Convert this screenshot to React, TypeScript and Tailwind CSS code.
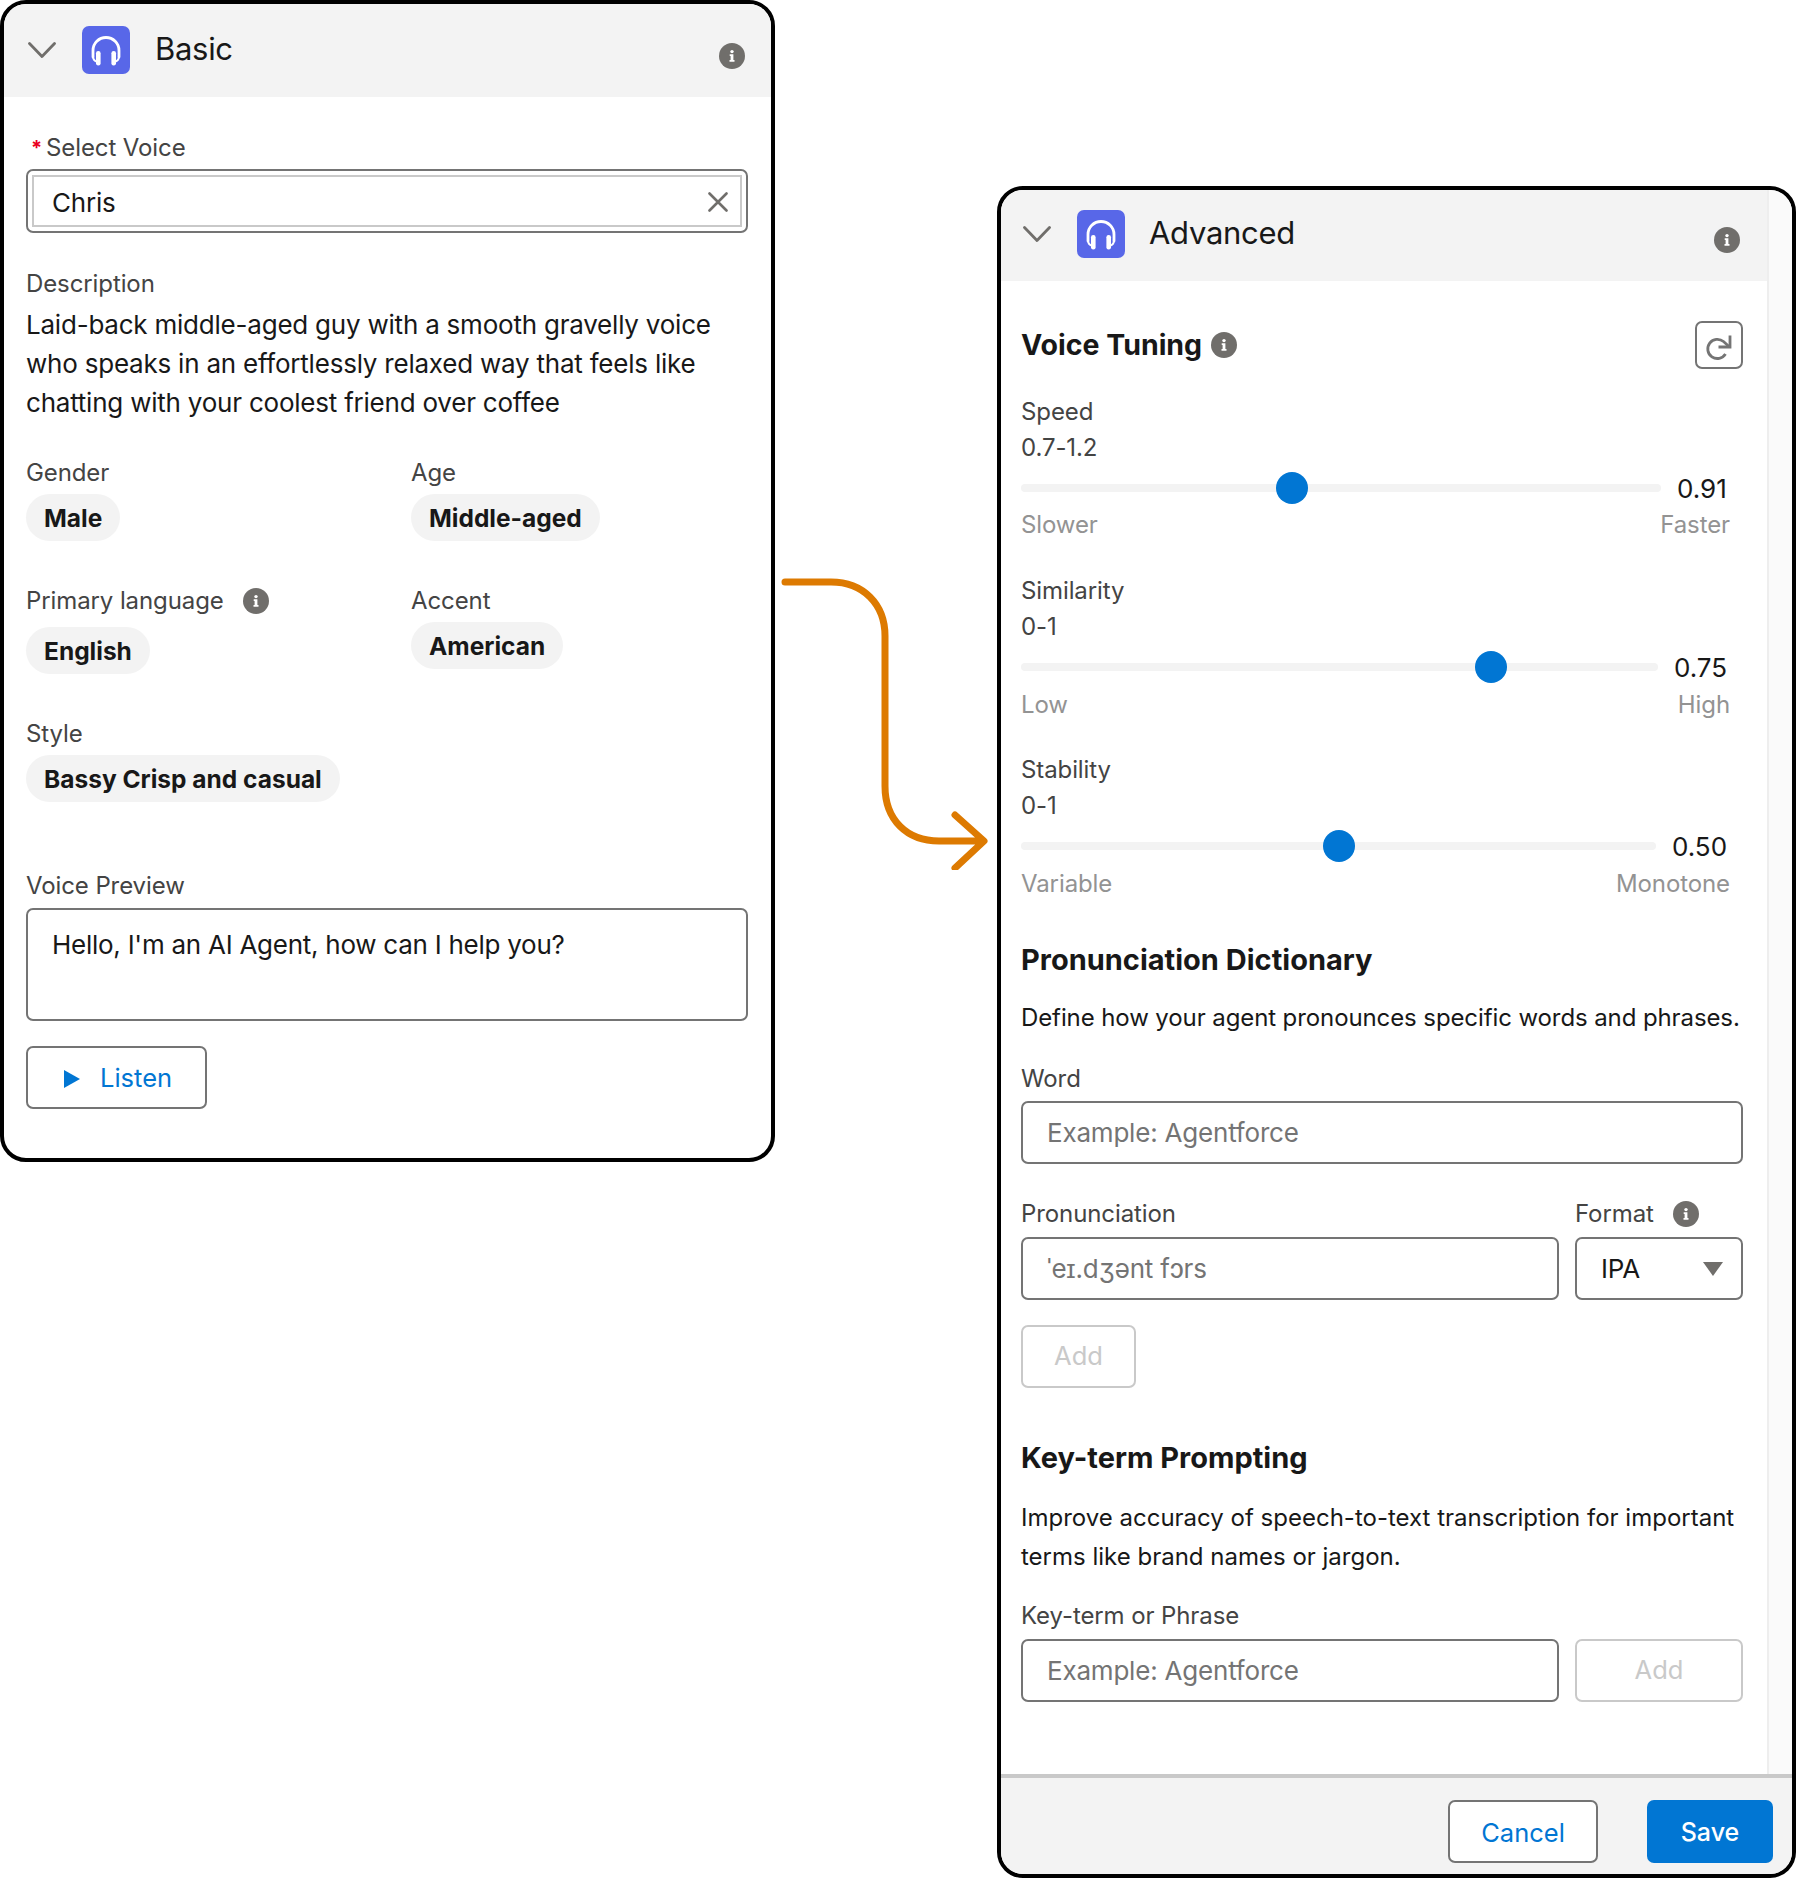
import React from "react";

function Info({ className = "" }: { className?: string }) {
  return (
    <svg viewBox="0 0 26 26" className={"w-[26px] h-[26px] shrink-0 " + className}>
      <circle cx="13" cy="13" r="13" fill="#706e6b" />
      <circle cx="13" cy="8.6" r="1.7" fill="#fff" />
      <path d="M10.7 11.2h3.7v5.8h1.1v1.8H10.5V17h1.1v-4h-.9z" fill="#fff" />
    </svg>
  );
}

function Chevron() {
  return (
    <svg viewBox="0 0 28 16" className="w-[28px] h-[16px] shrink-0" fill="none">
      <path d="M1.5 1.5 14 14.5 26.5 1.5" stroke="#706e6b" strokeWidth="2.8" strokeLinecap="round" strokeLinejoin="round" />
    </svg>
  );
}

function HeadIcon() {
  return (
    <div className="w-[48px] h-[48px] rounded-[7px] bg-[#5867e8] shrink-0">
      <svg viewBox="0 0 48 48" className="w-[48px] h-[48px]" fill="none">
        <path d="M11 31V24.5a13 13 0 0 1 26 0V31" stroke="#fff" strokeWidth="2.8" strokeLinecap="round" />
        <path d="M11 30c0 3 1.2 4.8 3.5 5.6M37 30c0 3-1.2 4.8-3.5 5.6" stroke="#fff" strokeWidth="2" />
        <rect x="14" y="25" width="4.6" height="14.5" rx="2.2" fill="#fff" />
        <rect x="29.4" y="25" width="4.6" height="14.5" rx="2.2" fill="#fff" />
      </svg>
    </div>
  );
}

function Label({ children, className = "" }: { children: React.ReactNode; className?: string }) {
  return <div className={"h-[36px] leading-[36px] text-[24px] tracking-[-0.1px] text-[#444444] " + className}>{children}</div>;
}

function Pill({ children, className = "" }: { children: React.ReactNode; className?: string }) {
  return (
    <div className={"flex w-fit items-center h-[47px] pt-[1px] px-[18px] rounded-full bg-[#f3f3f3] text-[24.5px] font-bold text-[#181818] " + className}>
      {children}
    </div>
  );
}

function Slider({ track, pct, value, low, high, lowCls = "mt-[4px]" }: { track: string; pct: number; value: string; low: string; high: string; lowCls?: string }) {
  return (
    <div>
      <div className="mt-[6px] flex items-center h-[32px] gap-[16px]">
        <div className={"relative h-[8px] rounded-full bg-[#f3f3f3] " + track}>
          <div
            className="absolute top-[-12px] w-[32px] h-[32px] -ml-[16px] rounded-full bg-[#0176d3]"
            style={{ left: pct + "%" }}
          />
        </div>
        <div className="text-[26px] text-[#181818]">{value}</div>
      </div>
      <div className={"w-[709px] flex justify-between h-[36px] leading-[36px] text-[24px] tracking-[-0.1px] text-[#939393] " + lowCls}>
        <span>{low}</span>
        <span>{high}</span>
      </div>
    </div>
  );
}

const inputCls =
  "h-[63px] px-[24px] rounded-[7px] border-2 border-[#747474] bg-white text-[26px] tracking-[-0.2px] text-[#181818] outline-none placeholder:text-[#747474]";

function DisabledButton({ className = "" }: { className?: string }) {
  return (
    <button className={"h-[63px] rounded-[7px] border-2 border-[#c9c9c9] bg-white text-[25.5px] text-[#c9c9c9] " + className}>Add</button>
  );
}

export default function App() {
  return (
    <div className="w-[1796px] h-[1878px] bg-white flex items-start font-['Inter',sans-serif] overflow-hidden">
      <section className="w-[775px] h-[1162px] shrink-0 rounded-[26px] border-4 border-black overflow-hidden">
        <header className="h-[93px] bg-[#f3f3f3] flex items-center pl-[24px] pr-[26px] pb-[2px]">
          <Chevron />
          <div className="ml-[26px]"><HeadIcon /></div>
          <h2 className="ml-[25px] text-[31px] tracking-[-0.3px] text-[#181818] font-normal">Basic</h2>
          <Info className="ml-auto mt-[12px]" />
        </header>
        <div className="pl-[22px] pr-[23px]">
          <Label className="mt-[33px] pl-[5px] flex">
            <span className="text-[#ea001e] w-[15px] text-[20px] font-bold">*</span>Select Voice
          </Label>
          <div className="mt-[3px] h-[64px] rounded-[7px] border-2 border-[#747474] p-[4px]">
            <div className="h-full border-2 border-[#c9c9c9] flex items-center justify-between pt-[2px] pl-[18px] pr-[12px] text-[26px] tracking-[-0.2px] text-[#181818]">
              <span>Chris</span>
              <svg viewBox="0 0 20 20" className="w-[20px] h-[20px]" fill="none">
                <path d="M1.5 1.5 18.5 18.5M18.5 1.5 1.5 18.5" stroke="#706e6b" strokeWidth="2.6" strokeLinecap="round" />
              </svg>
            </div>
          </div>
          <Label className="mt-[33px]">Description</Label>
          <p className="mt-[3px] text-[26px] tracking-[-0.22px] leading-[39px] text-[#181818]">
            Laid-back middle-aged guy with a smooth gravelly voice
            <br />
            who speaks in an effortlessly relaxed way that feels like
            <br />
            chatting with your coolest friend over coffee
          </p>
          <div className="mt-[33px] grid grid-cols-[385px_1fr] gap-y-[42px]">
            <div>
              <Label>Gender</Label>
              <Pill className="mt-[3px]">Male</Pill>
            </div>
            <div>
              <Label>Age</Label>
              <Pill className="mt-[3px]">Middle-aged</Pill>
            </div>
            <div>
              <Label className="flex items-center gap-[19px]">
                Primary language <Info />
              </Label>
              <Pill className="mt-[8px]">English</Pill>
            </div>
            <div>
              <Label>Accent</Label>
              <Pill className="mt-[3px]">American</Pill>
            </div>
            <div className="col-span-2">
              <Label>Style</Label>
              <Pill className="mt-[3px]">Bassy Crisp and casual</Pill>
            </div>
          </div>
          <Label className="mt-[66px]">Voice Preview</Label>
          <div className="mt-[4px] h-[113px] rounded-[7px] border-2 border-[#747474] pl-[24px] pt-[15px] text-[26px] tracking-[-0.26px] leading-[39px] text-[#181818]">
            Hello, I'm an AI Agent, how can I help you?
          </div>
          <button className="mt-[25px] w-[181px] h-[63px] rounded-[7px] border-2 border-[#747474] flex items-center pl-[36px] pt-[1px] gap-[20px] text-[25.5px] text-[#0176d3]">
            <svg viewBox="0 0 16 18" className="w-[16px] h-[18px] mt-[2px]"><path d="M0 0 16 9 0 18z" fill="#0176d3" /></svg>
            Listen
          </button>
        </div>
      </section>

      <svg viewBox="0 0 222 300" className="w-[222px] h-[300px] shrink-0 mt-[570px]" fill="none">
        <path
          d="M10 12H56C88 12 110 34 110 66V216C110 250 132 271 164 271H208M180 245 209 271 180 298"
          stroke="#dd7a01"
          strokeWidth="7"
          strokeLinecap="round"
          strokeLinejoin="round"
        />
      </svg>

      <section className="w-[799px] h-[1692px] shrink-0 mt-[186px] rounded-[26px] border-4 border-black overflow-hidden flex flex-col">
        <div className="flex-1 flex min-h-0">
          <div className="w-[766px]">
            <header className="h-[91px] bg-[#f3f3f3] flex items-center pl-[22px] pr-[27px] pb-[4px]">
              <Chevron />
              <div className="ml-[26px]"><HeadIcon /></div>
              <h2 className="ml-[24px] text-[31px] tracking-[-0.3px] text-[#181818] font-normal">Advanced</h2>
              <Info className="ml-auto mt-[12px]" />
            </header>
            <div className="pl-[20px] pr-[24px]">
              <div className="mt-[40px] flex items-center h-[48px]">
                <h3 className="text-[28.5px] font-bold text-[#181818]">Voice Tuning</h3>
                <Info className="ml-[9px]" />
                <button className="ml-auto w-[48px] h-[48px] rounded-[7px] border-2 border-[#747474] shrink-0">
                  <svg viewBox="0 0 44 44" className="w-[44px] h-[44px]" fill="none">
                    <path d="M32.5 24 26.5 18.5A9.6 9.6 0 1 0 28.5 31" stroke="#747474" strokeWidth="2.8" />
                    <path d="M33 12.5V24H21.5" stroke="#747474" strokeWidth="2.8" />
                  </svg>
                </button>
              </div>
              <Label className="mt-[25px]">Speed</Label>
              <Label>0.7-1.2</Label>
              <Slider track="w-[640px]" pct={42.4} value="0.91" low="Slower" high="Faster" lowCls="mt-[3px]" />
              <Label className="mt-[30px]">Similarity</Label>
              <Label>0-1</Label>
              <Slider track="w-[637px]" pct={73.8} value="0.75" low="Low" high="High" />
              <Label className="mt-[29px]">Stability</Label>
              <Label>0-1</Label>
              <Slider track="w-[635px]" pct={50.1} value="0.50" low="Variable" high="Monotone" />
              <h3 className="mt-[38px] h-[40px] leading-[40px] text-[29px] font-bold text-[#181818]">Pronunciation Dictionary</h3>
              <p className="mt-[20px] h-[36px] leading-[36px] text-[24px] tracking-[-0.1px] text-[#181818] whitespace-nowrap">Define how your agent pronounces specific words and phrases.</p>
              <Label className="mt-[25px]">Word</Label>
              <input className={inputCls + " mt-[4px] w-full block"} placeholder="Example: Agentforce" />
              <div className="mt-[32px] flex gap-[16px]">
                <div className="w-[538px]">
                  <Label>Pronunciation</Label>
                  <input className={inputCls + " mt-[5px] w-full block"} placeholder="ˈeɪ.dʒənt fɔrs" />
                </div>
                <div className="flex-1">
                  <Label className="flex items-center gap-[19px]">Format <Info /></Label>
                  <div className="mt-[5px] h-[63px] rounded-[7px] border-2 border-[#747474] flex items-center justify-between pl-[24px] pr-[18px] text-[26px] tracking-[-0.2px] text-[#181818]">
                    IPA
                    <svg viewBox="0 0 20 14" className="w-[20px] h-[14px]"><path d="M0 0H20L10 14z" fill="#706e6b" /></svg>
                  </div>
                </div>
              </div>
              <DisabledButton className="mt-[25px] w-[115px] block" />
              <h3 className="mt-[50px] h-[40px] leading-[40px] text-[29px] font-bold text-[#181818]">Key-term Prompting</h3>
              <p className="mt-[20px] text-[24px] leading-[39px] text-[#181818] whitespace-nowrap">
                Improve accuracy of speech-to-text transcription for important
                <br />
                terms like brand names or jargon.
              </p>
              <Label className="mt-[22px]">Key-term or Phrase</Label>
              <div className="mt-[5px] flex gap-[16px]">
                <input className={inputCls + " w-[538px] block"} placeholder="Example: Agentforce" />
                <DisabledButton className="flex-1" />
              </div>
            </div>
          </div>
          <div className="flex-1 bg-[#fafafa] border-l-2 border-[#eeeeee]" />
        </div>
        <footer className="h-[100px] shrink-0 border-t-4 border-[#c9c9c9] bg-[#f3f3f3] flex justify-end pt-[22px] pr-[19px] gap-[49px]">
          <button className="w-[150px] h-[63px] rounded-[7px] border-2 border-[#747474] bg-white pt-[3px] text-[25.5px] text-[#0176d3]">Cancel</button>
          <button className="w-[126px] h-[63px] rounded-[7px] bg-[#0176d3] pt-[3px] text-[25px] text-white font-medium">Save</button>
        </footer>
      </section>
    </div>
  );
}
